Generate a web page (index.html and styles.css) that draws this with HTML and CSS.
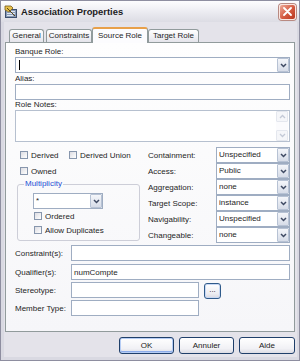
FILE: index.html
```html
<!DOCTYPE html>
<html>
<head>
<meta charset="utf-8">
<title>Association Properties</title>
<link rel="stylesheet" href="styles.css">
</head>
<body>
<div class="window">
  <div class="titlebar">
    <svg class="appicon" width="14" height="14" viewBox="0 0 14 14">
      <rect x="1.5" y="4.5" width="11" height="8" fill="#8a9cb8" stroke="#3d4f6e"/>
      <rect x="3" y="6" width="8" height="1" fill="#dfe6f0"/>
      <rect x="3" y="8" width="8" height="1" fill="#dfe6f0"/>
      <rect x="3" y="10" width="6" height="1" fill="#dfe6f0"/>
      <polygon points="1,1 7,1 9,3 5,7 1,5" fill="#e6c04a" stroke="#7a5a16" stroke-width="0.8"/>
      <line x1="3" y1="3" x2="11" y2="11" stroke="#5a4418" stroke-width="1"/>
    </svg>
    <span class="title">Association Properties</span>
    <span class="close">
      <svg width="9" height="9" viewBox="0 0 9 9"><path d="M1 1 L8 8 M8 1 L1 8" stroke="#fff" stroke-width="1.8" stroke-linecap="round"/></svg>
    </span>
  </div>
  <div class="frame">
    <div class="client">
      <div class="tabs">
        <div class="tab t-general">General</div>
        <div class="tab t-constraints">Constraints</div>
        <div class="tab t-source active">Source Role</div>
        <div class="tab t-target">Target Role</div>
      </div>
      <div class="panel">
        <div class="lbl">Banque Role:</div>
        <div class="combo"><span class="val"><span class="caret"></span></span><span class="drop"><svg width="7" height="5" viewBox="0 0 7 5"><path d="M1 1 L3.5 3.5 L6 1" fill="none" stroke="#3f4a63" stroke-width="1.5"/></svg></span></div>
        <div class="lbl lbl-gap">Alias:</div>
        <div class="field"></div>
        <div class="lbl">Role Notes:</div>
        <div class="notes">
          <div class="notes-text"></div>
          <div class="vscroll">
            <span class="sbtn"><svg width="7" height="5" viewBox="0 0 7 5"><path d="M1 4 L3.5 1.5 L6 4" fill="none" stroke="#c3c9d6" stroke-width="1.3"/></svg></span>
            <span class="strack"></span>
            <span class="sbtn"><svg width="7" height="5" viewBox="0 0 7 5"><path d="M1 1 L3.5 3.5 L6 1" fill="none" stroke="#c3c9d6" stroke-width="1.3"/></svg></span>
          </div>
        </div>

        <div class="mid">
          <div class="left">
            <div class="checkrow">
              <span class="chk chk-derived"><span class="box"></span>Derived</span>
              <span class="chk"><span class="box"></span>Derived Union</span>
            </div>
            <div class="checkrow">
              <span class="chk"><span class="box"></span>Owned</span>
            </div>
            <fieldset class="group">
              <legend>Multiplicity</legend>
              <div class="combo mult"><span class="val">*</span><span class="drop"><svg width="7" height="5" viewBox="0 0 7 5"><path d="M1 1 L3.5 3.5 L6 1" fill="none" stroke="#3f4a63" stroke-width="1.5"/></svg></span></div>
              <div class="grow-row"><span class="chk"><span class="box"></span>Ordered</span></div>
              <div class="grow-row"><span class="chk"><span class="box"></span>Allow Duplicates</span></div>
            </fieldset>
          </div>
          <div class="right">
            <div class="prop"><span class="plbl">Containment:</span><div class="combo pc"><span class="val">Unspecified</span><span class="drop"><svg width="7" height="5" viewBox="0 0 7 5"><path d="M1 1 L3.5 3.5 L6 1" fill="none" stroke="#3f4a63" stroke-width="1.5"/></svg></span></div></div>
            <div class="prop"><span class="plbl">Access:</span><div class="combo pc"><span class="val">Public</span><span class="drop"><svg width="7" height="5" viewBox="0 0 7 5"><path d="M1 1 L3.5 3.5 L6 1" fill="none" stroke="#3f4a63" stroke-width="1.5"/></svg></span></div></div>
            <div class="prop"><span class="plbl">Aggregation:</span><div class="combo pc"><span class="val">none</span><span class="drop"><svg width="7" height="5" viewBox="0 0 7 5"><path d="M1 1 L3.5 3.5 L6 1" fill="none" stroke="#3f4a63" stroke-width="1.5"/></svg></span></div></div>
            <div class="prop"><span class="plbl">Target Scope:</span><div class="combo pc"><span class="val">instance</span><span class="drop"><svg width="7" height="5" viewBox="0 0 7 5"><path d="M1 1 L3.5 3.5 L6 1" fill="none" stroke="#3f4a63" stroke-width="1.5"/></svg></span></div></div>
            <div class="prop"><span class="plbl">Navigability:</span><div class="combo pc"><span class="val">Unspecified</span><span class="drop"><svg width="7" height="5" viewBox="0 0 7 5"><path d="M1 1 L3.5 3.5 L6 1" fill="none" stroke="#3f4a63" stroke-width="1.5"/></svg></span></div></div>
            <div class="prop"><span class="plbl">Changeable:</span><div class="combo pc"><span class="val">none</span><span class="drop"><svg width="7" height="5" viewBox="0 0 7 5"><path d="M1 1 L3.5 3.5 L6 1" fill="none" stroke="#3f4a63" stroke-width="1.5"/></svg></span></div></div>
          </div>
        </div>

        <div class="frow r1"><span class="flbl">Constraint(s):</span><div class="field fgrow"></div></div>
        <div class="frow r2"><span class="flbl">Qualifier(s):</span><div class="field fgrow"><span class="ftext">numCompte</span></div></div>
        <div class="frow r3"><span class="flbl">Stereotype:</span><div class="field fshort"></div><span class="dots">...</span></div>
        <div class="frow r4"><span class="flbl">Member Type:</span><div class="field fshort"></div></div>
      </div>
      <div class="buttons">
        <span class="btn default">OK</span>
        <span class="btn">Annuler</span>
        <span class="btn aide">Aide</span>
      </div>
    </div>
  </div>
</div>
</body>
</html>
```

FILE: styles.css
```css
* { box-sizing: border-box; }
html, body { margin: 0; padding: 0; }
body {
  width: 300px;
  height: 361px;
  overflow: hidden;
  font-family: "Liberation Sans", Arial, sans-serif;
  font-size: 8px;
  color: #1e1e1e;
  background: #ffffff;
}

.window {
  width: 300px;
  height: 361px;
  border: 1px solid #8e8ea0;
  background: #d9d9e2;
  display: flex;
  flex-direction: column;
}

/* title bar */
.titlebar {
  height: 21px;
  flex: none;
  display: flex;
  align-items: center;
  padding: 0 3px 0 3px;
  background: linear-gradient(#fdfdfe, #eeeef3 45%, #dcdce4);
}
.appicon { flex: none; margin-top: 1px; }
.title {
  margin-left: 3px;
  font-weight: bold;
  font-size: 9.4px;
  color: #1c1c22;
}
.close {
  margin-left: auto;
  width: 17px;
  height: 16px;
  border: 1px solid #fbe6e0;
  border-radius: 3px;
  box-shadow: 0 0 0 1px #b88a82;
  background: linear-gradient(135deg, #eeaa98, #d45a40 55%, #b8361f);
  display: flex;
  align-items: center;
  justify-content: center;
}

/* frame & client */
.frame {
  flex: 1;
  padding: 0 3px 3px 3px;
  display: flex;
}
.client {
  flex: 1;
  background: #e4e3ea;
  padding: 5px 2px 3px 0;
  display: flex;
  flex-direction: column;
}

/* tabs */
.tabs {
  height: 15px;
  flex: none;
  display: flex;
  align-items: flex-end;
  margin-left: 5px;
  position: relative;
  z-index: 1;
}
.tab {
  height: 13px;
  border: 1px solid #919b9c;
  border-bottom: none;
  border-radius: 3px 3px 0 0;
  background: linear-gradient(#ffffff, #f0f0f4 60%, #e4e4ea);
  text-align: center;
  line-height: 12px;
  white-space: nowrap;
}
.t-general { width: 35px; margin-right: 2px; }
.t-constraints { width: 46px; }
.t-source { width: 56px; }
.t-target { width: 51px; }
.tab.active {
  height: 16px;
  margin-bottom: -1px;
  background: #fcfcfe;
  border-top: 2px solid #e8a04a;
  line-height: 13px;
}

/* panel */
.panel {
  height: 290px;
  flex: none;
  margin-left: 1px;
  width: 290px;
  border: 1px solid #919b9c;
  background: linear-gradient(#fefefe, #f6f6f9);
  padding: 4px 4px 0 9px;
  display: flex;
  flex-direction: column;
}
.lbl {
  height: 10px;
  line-height: 10px;
  flex: none;
}
.lbl-gap { margin-top: 1px; }

.combo, .field {
  height: 16px;
  flex: none;
  border: 1px solid #9fadc2;
  background: #ffffff;
}
.combo {
  display: flex;
  align-items: center;
  padding-left: 2px;
}
.combo .val {
  flex: 1;
  white-space: nowrap;
  overflow: hidden;
  line-height: 12px;
}
.caret {
  display: inline-block;
  width: 1px;
  height: 10px;
  background: #000;
  vertical-align: middle;
  margin-left: 1px;
}
.drop {
  flex: none;
  width: 12px;
  height: 14px;
  border: 1px solid #b7c2d4;
  border-radius: 1px;
  background: linear-gradient(#f4f6fa, #d6dce8);
  display: flex;
  align-items: center;
  justify-content: center;
}

.notes {
  height: 32px;
  flex: none;
  border: 1px solid #b6c0cf;
  background: #fff;
  display: flex;
}
.notes-text { flex: 1; }
.vscroll {
  width: 13px;
  display: flex;
  flex-direction: column;
  padding: 0 1px 0 0;
}
.sbtn {
  height: 11px;
  border: 1px solid #e4e7ee;
  border-radius: 1px;
  background: #f5f6f9;
  display: flex;
  align-items: center;
  justify-content: center;
}
.strack { flex: 1; background: #fbfbfd; }

/* middle section */
.mid {
  margin-top: 5px;
  height: 96px;
  flex: none;
  display: grid;
  grid-template-columns: 125px 1fr;
  column-gap: 8px;
}
.left { display: flex; flex-direction: column; }
.checkrow {
  height: 16px;
  display: flex;
  align-items: center;
  padding-left: 5px;
}
.chk {
  display: flex;
  align-items: center;
  white-space: nowrap;
}
.chk-derived { width: 49px; }
.box {
  width: 8px;
  height: 8px;
  margin-right: 3px;
  border: 1px solid #8796ad;
  background: linear-gradient(135deg, #dcdce2, #ffffff);
  flex: none;
}

.group {
  margin: 0 0 0 2px;
  width: 123px;
  min-width: 0;
  height: 62px;
  border: 1px solid #cdced8;
  border-radius: 3px;
  padding: 4px 0 0 0;
}
.group legend {
  margin-left: 6px;
  padding: 0 1px;
  line-height: 10px;
  height: 10px;
  color: #1d4fd4;
}
.mult { width: 70px; margin-left: 15px; }
.grow-row {
  height: 14px;
  display: flex;
  align-items: center;
  padding-left: 16px;
}

.right { display: flex; flex-direction: column; }
.prop {
  height: 16px;
  display: flex;
  align-items: center;
}
.plbl { flex: 1; white-space: nowrap; }
.pc { width: 74px; }

/* bottom rows */
.frow {
  height: 16px;
  flex: none;
  display: flex;
  align-items: center;
  margin-top: 2px;
}
.r2 { margin-top: 3px; }
.flbl { width: 56px; flex: none; white-space: nowrap; }
.fgrow { flex: 1; }
.fshort { width: 128px; }
.field { display: flex; align-items: center; }
.ftext { padding-left: 2px; }
.dots {
  margin-left: 5px;
  margin-top: 2px;
  width: 17px;
  height: 16px;
  border: 1px solid #2f5a8a;
  border-radius: 3px;
  background: linear-gradient(#ffffff, #ececf1 70%, #d8d8e0);
  box-shadow: inset 0 0 0 1px #c8d8f4;
  text-align: center;
  line-height: 12px;
  font-size: 8px;
}

/* buttons */
.buttons {
  margin-top: 5px;
  height: 17px;
  flex: none;
  display: flex;
  justify-content: flex-end;
  gap: 5px;
}
.btn {
  width: 55px;
  height: 17px;
  border: 1px solid #1f3f6a;
  border-radius: 3px;
  background: linear-gradient(#ffffff, #f1f1f5 70%, #dcdce4);
  text-align: center;
  line-height: 15px;
  color: #222;
}
.btn.aide { width: 56px; }
.btn.default {
  box-shadow: inset 0 0 0 1px #b6cdf5, inset 0 -1px 0 1px #8cacea;
}
```
